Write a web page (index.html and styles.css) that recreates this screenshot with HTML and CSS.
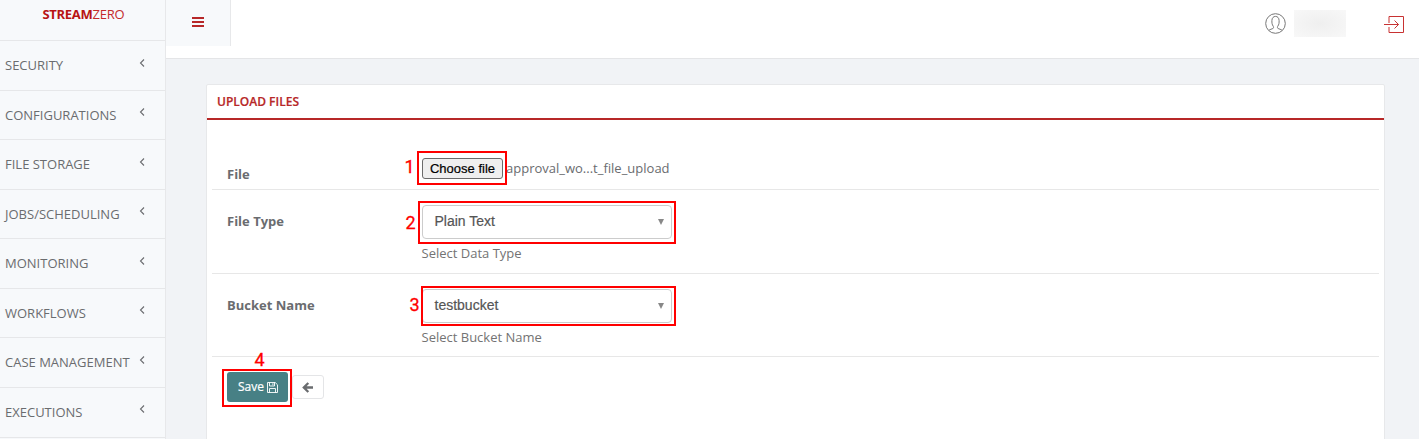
FILE: index.html
```html
<!DOCTYPE html>
<html lang="en">
<head>
<meta charset="utf-8">
<title>StreamZero - Upload Files</title>
<link rel="stylesheet" href="styles.css">
</head>
<body>
<div class="app">
  <aside class="sidebar">
    <div class="brand"><b>STREAM</b><span>ZERO</span></div>
    <nav class="menu">
      <a class="item"><span>SECURITY</span><svg class="chev" viewBox="0 0 6 8"><path d="M5 .5 1.500 4 5 7.500"/></svg></a>
      <a class="item"><span>CONFIGURATIONS</span><svg class="chev" viewBox="0 0 6 8"><path d="M5 .5 1.500 4 5 7.500"/></svg></a>
      <a class="item"><span>FILE STORAGE</span><svg class="chev" viewBox="0 0 6 8"><path d="M5 .5 1.500 4 5 7.500"/></svg></a>
      <a class="item"><span>JOBS/SCHEDULING</span><svg class="chev" viewBox="0 0 6 8"><path d="M5 .5 1.500 4 5 7.500"/></svg></a>
      <a class="item"><span>MONITORING</span><svg class="chev" viewBox="0 0 6 8"><path d="M5 .5 1.500 4 5 7.500"/></svg></a>
      <a class="item"><span>WORKFLOWS</span><svg class="chev" viewBox="0 0 6 8"><path d="M5 .5 1.500 4 5 7.500"/></svg></a>
      <a class="item"><span>CASE MANAGEMENT</span><svg class="chev" viewBox="0 0 6 8"><path d="M5 .5 1.500 4 5 7.500"/></svg></a>
      <a class="item"><span>EXECUTIONS</span><svg class="chev" viewBox="0 0 6 8"><path d="M5 .5 1.500 4 5 7.500"/></svg></a>
    </nav>
  </aside>
  <div class="page">
    <header class="topbar">
      <div class="toggle"><i></i><i></i><i></i></div>
      <div class="user">
        <svg class="avatar" viewBox="0 0 21 21"><circle cx="10.5" cy="10.5" r="9.8"/><path d="M3.800 17.500c.8-1.200 3.400-1.400 4.400-2.200.5-.5.4-1.500 0-2.100C7 11.600 6.800 9.600 6.900 7.500 7 4.800 8.500 3.400 10.500 3.400s3.500 1.400 3.600 4.100c.1 2.100-.1 4.100-1.300 5.700-.4.6-.5 1.600 0 2.100 1 .8 3.600 1 4.400 2.200"/></svg>
        <span class="username"></span>
        <svg class="logout" viewBox="0 0 21 18"><path d="M5 7V.5h14.500v16H5V11M0 8.500h14.500M10.500 4.500l4 4-4 4"/></svg>
      </div>
    </header>
    <main class="content">
      <section class="panel">
        <h1 class="title">UPLOAD FILES</h1>
        <div class="form">
          <div class="row file-row">
            <label>File</label>
            <div class="field file-field"><button class="choose">Choose file</button><span class="filename">approval_wo...t_file_upload</span></div>
          </div>
          <div class="row type-row">
            <label>File Type</label>
            <div class="field"><div class="select"><span>Plain Text</span><i class="arrow"></i></div><p class="help">Select Data Type</p></div>
          </div>
          <div class="row bucket-row">
            <label>Bucket Name</label>
            <div class="field"><div class="select"><span>testbucket</span><i class="arrow"></i></div><p class="help">Select Bucket Name</p></div>
          </div>
          <div class="actions">
            <button class="save"><span>Save</span><svg class="disk" viewBox="0 0 11 11"><path d="M.5.5h7.700L10.500 2.800v7.700H.5zM2.500.5v3.500h5V.5M2.500 10.500V6.500h6v4M5.900 1.200v2"/></svg></button>
            <button class="back"><svg viewBox="0 0 12 11"><path d="M6.300 1 1.800 5.500l4.500 4.500M2.200 5.500H11"/></svg></button>
          </div>
        </div>
      </section>
    </main>
  </div>
  <div class="mark box1"></div><span class="num num1">1</span>
  <div class="mark box2"></div><span class="num num2">2</span>
  <div class="mark box3"></div><span class="num num3">3</span>
  <div class="mark box4"></div><span class="num num4">4</span>
</div>
</body>
</html>
```
FILE: styles.css
```css
* { box-sizing: border-box; }
body { margin: 0; font-family: "Open Sans", sans-serif; font-size: 13px; color: #6a6c6f; overflow: hidden; }
.app { position: relative; display: flex; width: 1419px; height: 439px; overflow: hidden; background: #f1f3f6; }
.sidebar { width: 166px; flex: none; background: #f7f9fb; border-right: 1px solid #e7e8ea; }
.brand { height: 41px; padding: 4px 0 0 2px; border-bottom: 1px solid #e6e7e9; text-align: center; font-size: 13px; line-height: 20px; color: #c42a2a; letter-spacing: -.2px; }
.brand b { color: #b81414; letter-spacing: -.3px; }
.item { display: flex; justify-content: space-between; height: 49.57px; padding: 14px 20px 0 5px; border-bottom: 1px solid #e6e7e9; line-height: 20px; white-space: nowrap; }
.chev { width: 6px; height: 8px; margin-top: 3.5px; fill: none; stroke: #6a6c6f; stroke-width: 1.1; }
.page { flex: 1; display: flex; flex-direction: column; }
.topbar { height: 59px; flex: none; display: flex; justify-content: space-between; background: #fff; border-bottom: 1px solid #e4e5e7; }
.toggle { width: 65px; height: 46px; padding: 17px 0 0 26px; background: #f7f9fb; border-right: 1px solid #e7e8ea; }
.toggle i { display: block; width: 12px; height: 2px; margin-bottom: 2px; background: #b72828; }
.user { display: flex; padding: 10px 14px 0 0; }
.avatar { width: 21px; height: 21px; margin-top: 3px; fill: none; stroke: #777; stroke-width: 1; }
.username { width: 52px; height: 27px; margin: 0 38px 0 8px; background: radial-gradient(ellipse, #efefef, #f8f8f8); }
.logout { width: 21px; height: 18px; margin-top: 6px; fill: none; stroke: #c83232; stroke-width: 1; }
.content { flex: 1; padding: 25px 34px 0 40px; }
.panel { height: 370px; background: #fff; border: 1px solid #e7e8ea; border-radius: 2px; }
.title { height: 35px; margin: 0; padding: 7px 10px 0; border-bottom: 2px solid #b72828; font-size: 12px; line-height: 20px; font-weight: 600; -webkit-text-stroke: .2px #b72828; color: #b72828; }
.form { padding: 26px 5px 0; }
.row { display: flex; padding-left: 15px; border-bottom: 1px solid #e7e7e7; }
.row label { width: 194px; line-height: 20px; font-weight: 700; }
.file-row { height: 44px; }
.file-row label { padding-top: 18px; }
.file-field { display: flex; align-items: flex-start; padding-top: 12px; }
.choose { width: 81px; height: 21px; margin: 0 3px 0 1px; padding: 0; border: 1px solid #6b6b6b; border-radius: 3px; background: #efefef; color: #000; font: 13px/17px "Liberation Sans", sans-serif; -webkit-text-stroke: .2px #000; }
.filename { line-height: 20px; }
.type-row { height: 84px; padding-top: 15px; }
.bucket-row { height: 83px; padding-top: 15px; }
.type-row label, .bucket-row label { padding-top: 6px; }
.select { display: flex; justify-content: space-between; width: 250px; height: 34px; margin-left: 1px; padding: 0 7px 0 11.5px; border: 1px solid #ccc; border-radius: 4px; font: 14px/30px "Liberation Sans", sans-serif; color: #555; -webkit-text-stroke: .2px #555; }
.arrow { align-self: center; border: 3.5px solid transparent; border-top: 6px solid #888; border-bottom: 0; }
.help { margin: 4px 0 0 .5px; line-height: 20px; color: #737373; }
.actions { display: flex; align-items: flex-start; padding: 15px 0 0 15px; }
.save { display: flex; align-items: center; gap: 3px; width: 61px; height: 30px; padding: 0 0 0 11px; border: 0; border-radius: 3px; background: #478085; color: #fff; font: 12px/18px "Open Sans", sans-serif; -webkit-text-stroke: .2px #fff; }
.disk { width: 11px; height: 11px; fill: none; stroke: #fff; stroke-width: .9; }
.back { display: flex; align-items: center; justify-content: center; width: 32px; height: 24px; margin: 3px 0 0 4px; padding: 0; border: 1px solid #e4e5e7; border-radius: 3px; background: #fff; }
.back svg { width: 12px; height: 11px; fill: none; stroke: #6a6c6f; stroke-width: 2.3; }
.mark { position: absolute; border: 2px solid #f00; }
.box1 { left: 417px; top: 151px; width: 90px; height: 34px; }
.box2 { left: 418px; top: 201px; width: 258px; height: 43px; }
.box3 { left: 421px; top: 286px; width: 255px; height: 40px; }
.box4 { left: 222px; top: 369px; width: 70px; height: 38px; }
.num { position: absolute; color: #f00; font: 18px/20px Roboto, sans-serif; -webkit-text-stroke: .3px #f00; }
.num1 { left: 404.5px; top: 157px; }
.num2 { left: 405.5px; top: 213px; }
.num3 { left: 409.5px; top: 295px; }
.num4 { left: 254.5px; top: 350px; }
```
